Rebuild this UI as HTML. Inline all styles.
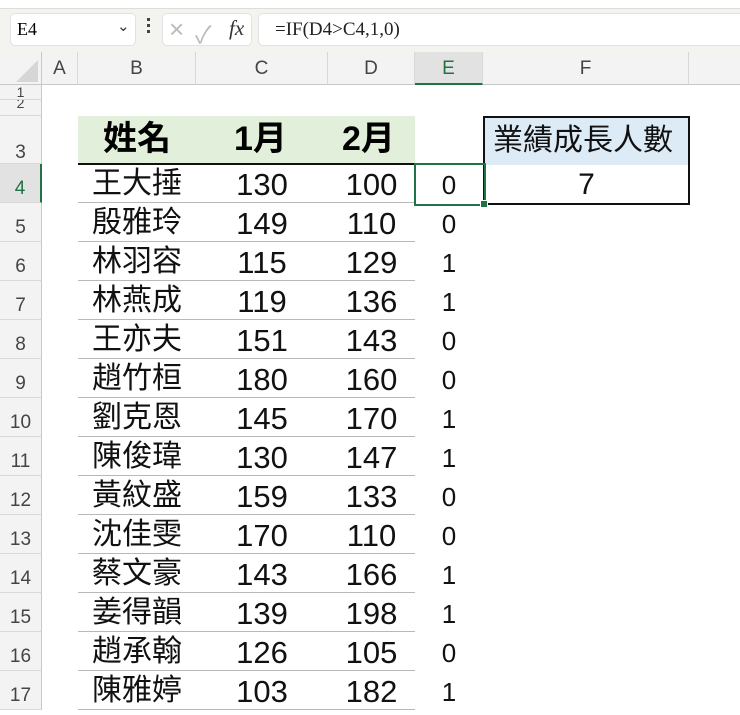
<!DOCTYPE html>
<html><head><meta charset="utf-8"><style>
body{margin:0;width:740px;height:715px;overflow:hidden;background:#fff;font-family:"Liberation Sans","Noto Sans CJK TC",sans-serif;position:relative}
.a{position:absolute}
.bar{left:0;top:0;width:740px;height:52px;background:#f3f3f0}
.box{background:#fff;border:1px solid #e2e2e2;border-radius:5px}
.ch{top:52px;height:33px;background:#f3f3f3;border-right:1px solid #d8d8d8;border-bottom:1px solid #c8c8c8;box-sizing:border-box;text-align:center;line-height:33px;font-size:19px;color:#444}
.rh{left:0;width:42px;background:#f3f3f3;border-right:1px solid #c8c8c8;border-bottom:1px solid #d8d8d8;box-sizing:border-box;text-align:center;font-size:19px;color:#444;padding-top:14px}
.c{font-size:31px;color:#111;height:39px;line-height:42px}
.n{font-size:30px;color:#111;left:92px;height:39px;line-height:40px;white-space:nowrap}
.ln{left:78px;width:337px;height:1px;background:#b8b8b8}
</style></head><body>
<div class="a bar"></div>
<div class="a" style="left:0;top:0;width:740px;height:8px;background:#fff;border-bottom:1px solid #ddd"></div>
<div class="a box" style="left:10px;top:13px;width:124px;height:31px"><span class="a" style="left:6px;top:5px;font-family:'Liberation Serif',serif;font-size:18px">E4</span><span class="a" style="left:106px;top:3px;font-size:15px;color:#333">&#8964;</span></div>
<div class="a" style="left:147px;top:18px;width:3px;height:3px;background:#444;box-shadow:0 6px #444,0 12px #444"></div>
<div class="a box" style="left:162px;top:13px;width:88px;height:31px"><span class="a" style="left:6px;top:0px;font-size:26px;color:#bbb">×</span><span class="a" style="left:32px;top:1px;font-size:24px;color:#bbb">✓</span><span class="a" style="left:66px;top:2px;font-family:'Liberation Serif',serif;font-style:italic;font-size:21px;color:#333">fx</span></div>
<div class="a box" style="left:258px;top:13px;width:490px;height:31px"><span class="a" style="left:16px;top:5px;font-family:'Liberation Serif',serif;font-size:19px;color:#222">=IF(D4&gt;C4,1,0)</span></div>
<div class="a" style="left:0;top:52px;width:42px;height:33px;background:#f3f3f3;border-right:1px solid #c8c8c8;border-bottom:1px solid #c8c8c8;box-sizing:border-box"></div>
<div class="a" style="left:16px;top:60px;width:0;height:0;border-left:22px solid transparent;border-bottom:22px solid #d6d6d6"></div>
<div class="a ch" style="left:42px;width:36px">A</div>
<div class="a ch" style="left:78px;width:118px">B</div>
<div class="a ch" style="left:196px;width:132px">C</div>
<div class="a ch" style="left:328px;width:87px">D</div>
<div class="a ch" style="left:415px;width:68px;background:#e2e2e2;color:#217346;border-bottom:2px solid #217346">E</div>
<div class="a ch" style="left:483px;width:206px">F</div>
<div class="a ch" style="left:689px;width:60px;border-right:none"></div>
<div class="a rh" style="top:85px;height:15px;padding-top:0;font-size:14px;line-height:15px;overflow:hidden">1</div>
<div class="a rh" style="top:100px;height:16px;padding-top:0;font-size:14px;line-height:6px;overflow:hidden">2</div>
<div class="a rh" style="top:116px;height:48px;padding-top:26px">3</div>
<div class="a" style="left:78px;top:116px;width:337px;height:47px;background:#e2efda"></div>
<div class="a" style="left:78px;top:163px;width:337px;height:2px;background:#111"></div>
<div class="a" style="left:103px;top:116px;font-size:34px;font-weight:bold;line-height:46px">姓名</div>
<div class="a" style="left:234px;top:116px;font-size:34px;font-weight:bold;line-height:46px">1月</div>
<div class="a" style="left:342px;top:116px;font-size:34px;font-weight:bold;line-height:46px">2月</div>
<div class="a" style="left:483px;top:116px;width:203px;height:85px;border:2px solid #111"></div>
<div class="a" style="left:485px;top:118px;width:203px;height:47px;background:#ddebf7"></div>
<div class="a" style="left:493px;top:118px;font-size:30px;line-height:46px;color:#111;white-space:nowrap">業績成長人數</div>
<div class="a" style="left:485px;top:164px;width:203px;text-align:center;font-size:30px;line-height:41px;color:#111">7</div>
<div id="rows"></div>
<div class="a" style="left:414px;top:163px;width:68px;height:39px;border:2px solid #217346;box-sizing:content-box"></div>
<div class="a" style="left:480px;top:200px;width:6px;height:6px;background:#217346;border:1px solid #fff"></div>
<script>
var d=[["王大捶",130,100,0],["殷雅玲",149,110,0],["林羽容",115,129,1],["林燕成",119,136,1],["王亦夫",151,143,0],["趙竹桓",180,160,0],["劉克恩",145,170,1],["陳俊瑋",130,147,1],["黃紋盛",159,133,0],["沈佳雯",170,110,0],["蔡文豪",143,166,1],["姜得韻",139,198,1],["趙承翰",126,105,0],["陳雅婷",103,182,1]];
var h="";
d.forEach(function(r,i){var t=164+i*39;
h+='<div class="a rh" style="top:'+t+'px;height:39px;'+(i==0?'background:#e2e2e2;color:#217346;border-right:2px solid #217346':'')+'">'+(i+4)+'</div>';
h+='<div class="a n" style="top:'+t+'px">'+r[0]+'</div>';
h+='<div class="a c" style="top:'+t+'px;left:196px;width:132px;text-align:center">'+r[1]+'</div>';
h+='<div class="a c" style="top:'+t+'px;left:328px;width:87px;text-align:center">'+r[2]+'</div>';
h+='<div class="a c" style="top:'+t+'px;left:415px;width:68px;text-align:center;font-size:26px">'+r[3]+'</div>';
if(i>0)h+='<div class="a ln" style="top:'+(t-1)+'px"></div>';
});
h+='<div class="a ln" style="top:709px"></div>';
document.getElementById("rows").innerHTML=h;
</script>
</body></html>
